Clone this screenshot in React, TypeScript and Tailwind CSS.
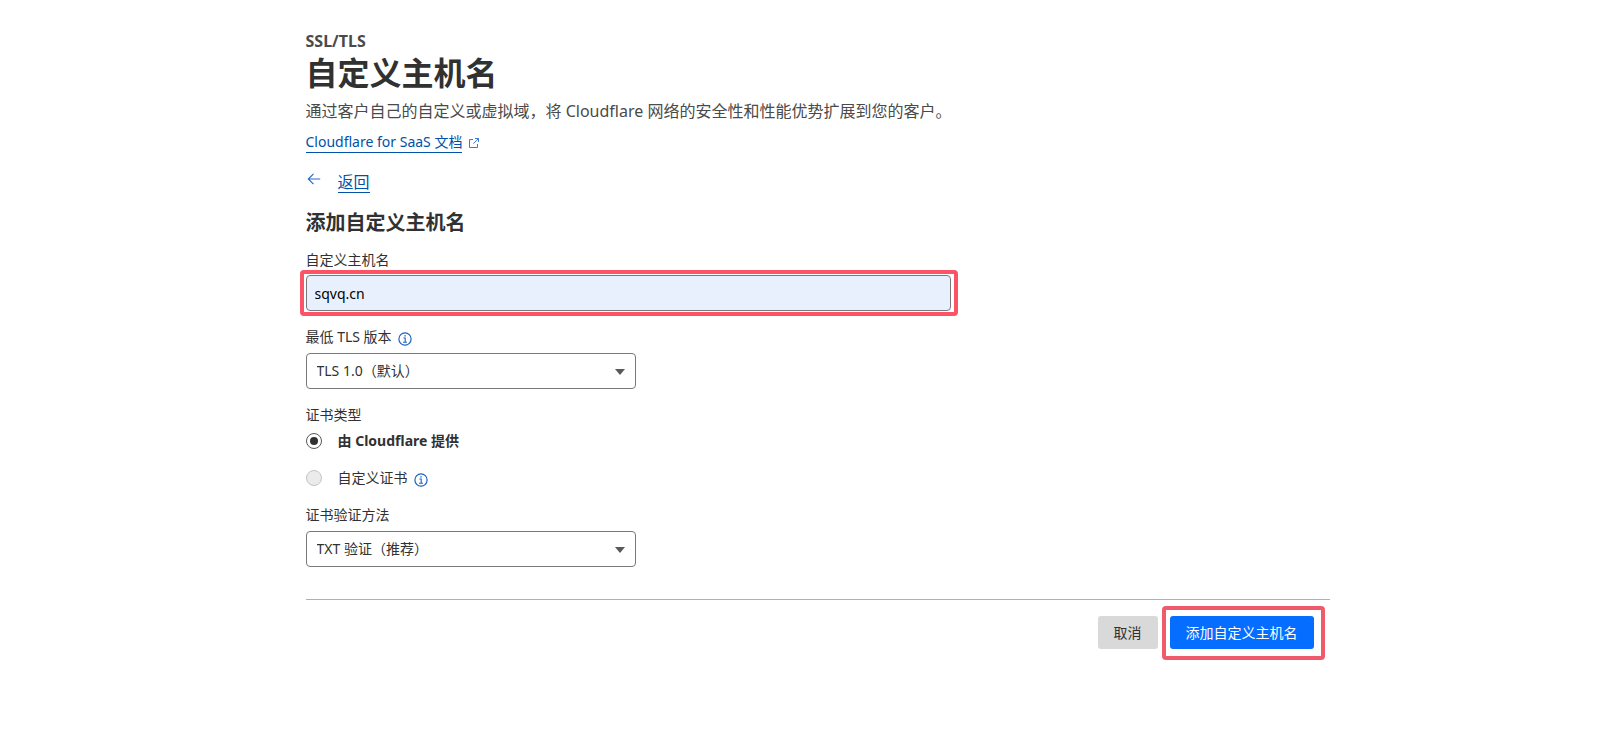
import * as React from "react";

function InfoIcon() {
  return (
    <svg
      className="mt-1 size-3.5 text-[#1d63c0]"
      viewBox="0 0 14 14"
      fill="none"
      stroke="currentColor"
      aria-hidden="true"
    >
      <circle cx="7" cy="7" r="6.1" strokeWidth="1.2" />
      <path d="M5.4 6h1.8v4M5 10.2h4" strokeWidth="1.1" />
      <path d="M6.3 3.2h1.4v1.4H6.3z" fill="currentColor" stroke="none" />
    </svg>
  );
}

function ExternalIcon() {
  return (
    <svg
      className="size-3 text-[#3f78cc]"
      viewBox="0 0 12 12"
      fill="none"
      stroke="currentColor"
      aria-hidden="true"
    >
      <path d="M5 2.5H1.5v8h8V7M7 1.5h3.5V5M10.5 1.5 5.4 6.6" />
    </svg>
  );
}

function BackIcon() {
  return (
    <svg
      className="mb-1.5 size-4 text-[#2b6cc4]"
      viewBox="0 0 16 16"
      fill="none"
      stroke="currentColor"
      aria-hidden="true"
    >
      <path d="M14.2 8H2.5M7.5 2.8 2.3 8l5.2 5.2" strokeWidth="1.2" />
    </svg>
  );
}

function SelectField(props: {
  id: string;
  label: string;
  value: string;
  info?: boolean;
}) {
  return (
    <div>
      <div className="flex items-center gap-1.5">
        <label htmlFor={props.id}>{props.label}</label>
        {props.info && <InfoIcon />}
      </div>
      <div className="relative mt-1.5 w-full max-w-[330px]">
        <select
          id={props.id}
          defaultValue={props.value}
          className="block h-9 w-full appearance-none rounded border border-[#797979] bg-white pr-8 pl-2.5"
        >
          <option value={props.value}>{props.value}</option>
        </select>
        {/* caret */}
        <svg
          className="pointer-events-none absolute top-4 right-[11px] h-1.5 w-2.5 text-[#595959]"
          viewBox="0 0 10 6"
          fill="currentColor"
          aria-hidden="true"
        >
          <path d="M0 0h10L5 6z" />
        </svg>
      </div>
    </div>
  );
}

function RadioOption(props: {
  label: string;
  checked?: boolean;
  disabled?: boolean;
  info?: boolean;
}) {
  return (
    <div className="flex items-center gap-1.5">
      <label className="flex items-center gap-4 has-checked:font-bold">
        <input
          type="radio"
          name="certificate-type"
          defaultChecked={props.checked}
          disabled={props.disabled}
          className="size-4 appearance-none rounded-full border border-[#797979] bg-white checked:border-[#595959] checked:bg-[#313131] checked:bg-clip-content checked:p-[3px] disabled:border-[#c4c4c4] disabled:bg-[#ebebeb]"
        />
        {props.label}
      </label>
      {props.info && <InfoIcon />}
    </div>
  );
}

export default function App() {
  return (
    <main className="min-h-screen bg-white pt-[29px] pb-16 pl-4 font-['Noto_Sans','Noto_Sans_CJK_SC',sans-serif] text-sm leading-5 text-[#313131]">
      <div className="mx-auto max-w-5xl">
        <header>
          <p className="text-base leading-6 font-bold text-[#4a4a4a]">SSL/TLS</p>
          <h1 className="text-[32px] leading-10 font-bold">自定义主机名</h1>
          <p className="mt-1.5 text-base leading-6 text-[#4a4a4a]">
            通过客户自己的自定义或虚拟域，将 Cloudflare 网络的安全性和性能优势扩展到您的客户。
          </p>
          <div className="mt-[9px] flex items-center gap-1.5">
            <a href="#docs" className="border-b border-[#0051a8] text-[#0051a8]">
              Cloudflare for SaaS 文档
            </a>
            <ExternalIcon />
          </div>
        </header>

        <a href="#back" className="mt-[18px] flex items-center gap-4 text-base leading-5 text-[#0051a8]">
          <BackIcon />
          <span className="border-b border-[#0051a8]">返回</span>
        </a>

        <form onSubmit={(e) => e.preventDefault()}>
          <h2 className="mt-4 text-xl leading-7 font-bold">添加自定义主机名</h2>

          <div className="mt-[13px]">
            <label htmlFor="hostname">自定义主机名</label>
            <div className="relative mt-[5px] w-full max-w-[645px]">
              <input
                id="hostname"
                type="text"
                defaultValue="sqvq.cn"
                className="block h-9 w-full rounded border border-[#797979] bg-[#e8f0fe] px-2 text-black"
              />
              <div className="pointer-events-none absolute -inset-y-[5px] -right-[7px] -left-1.5 rounded-sm border-4 border-[#fb5466]" />
            </div>
          </div>

          <div className="mt-4">
            <SelectField id="tls" label="最低 TLS 版本" value="TLS 1.0（默认）" info />
          </div>

          <fieldset className="mt-4">
            <legend>证书类型</legend>
            <div className="mt-1.5 space-y-[17px]">
              <RadioOption label="由 Cloudflare 提供" checked />
              <RadioOption label="自定义证书" disabled info />
            </div>
          </fieldset>

          <div className="mt-[17px]">
            <SelectField id="validation" label="证书验证方法" value="TXT 验证（推荐）" />
          </div>

          <div className="mt-8 flex justify-end gap-3 border-t border-[#b0b0b0] pt-4 pr-4">
            <button type="button" className="h-[33px] rounded-[3px] bg-[#d9d9d9] px-4">
              取消
            </button>
            <div className="relative">
              <button type="submit" className="h-[33px] rounded-[3px] bg-[#056dff] px-4 text-white">
                添加自定义主机名
              </button>
              <div className="pointer-events-none absolute -top-2.5 -right-[11px] -bottom-[11px] -left-2 rounded-sm border-4 border-[#f05b6b]" />
            </div>
          </div>
        </form>
      </div>
    </main>
  );
}
